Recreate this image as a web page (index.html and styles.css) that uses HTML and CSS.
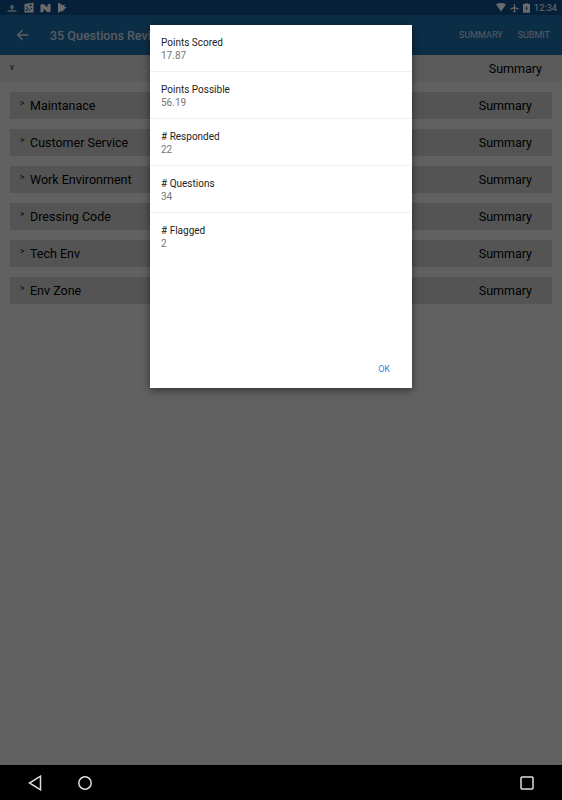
FILE: index.html
```html
<!DOCTYPE html>
<html lang="en">
<head>
<meta charset="utf-8">
<title>35 Questions Review</title>
<link rel="stylesheet" href="styles.css">
</head>
<body>
<div class="screen">
  <div class="status">
    <div class="status-group">
      <svg class="si" width="12" height="12" viewBox="0 0 12 12"><path class="dimicon" d="M6 2.500 8.700 5.500H7.200v2H4.800v-2H3.300zM1.500 8.300h9v1.500h-9z"/></svg>
      <svg class="si" width="10" height="12" viewBox="0 0 10 12"><path d="M.5 2 7 1l2.500-.5v10H.5z"/><circle class="cut" cx="2.800" cy="8" r="1.100"/><circle class="cut" cx="6.700" cy="3.300" r="1.100"/><path class="cutline" d="M2 4.500 5 7M5 9 8 6"/></svg>
      <svg class="si" width="11" height="12" viewBox="0 0 11 12"><path d="M.5 2.500 3.500 2l4 3.500V2.200l3-.2v8l-3 .3-4-3.800v3.500l-3 .3z"/></svg>
      <svg class="si" width="10" height="12" viewBox="0 0 10 12"><path d="M1 1v10l3-2 1 .8L9.500 5.300 7 4.500 8 2.500 5 3.500 4 1.800z"/></svg>
    </div>
    <div class="status-group status-right">
      <svg width="10" height="9" viewBox="0 0 10 9"><path d="M0 1.200Q5-1.200 10 1.200L5 8.500z"/></svg>
      <svg width="9" height="10" viewBox="0 0 12 12"><path d="M5.300.5h1.400v4l5 2.500v1.300l-5-1.500v3l1.500 1.100v.8L6 11l-2.200.7v-.8l1.500-1.100v-3l-5 1.500V7l5-2.500z"/></svg>
      <svg width="7" height="10" viewBox="0 0 8 11"><path d="M2.500 0h3v1H8v10H0V1h2.500z"/><path class="cut" d="M4.500 2.500 2.500 6.200H4L3.500 9l2-3.800H4z"/></svg>
      <span class="clock">12:34</span>
    </div>
  </div>
  <header class="appbar">
    <svg class="back" width="14" height="14" viewBox="0 0 14 14"><path d="M12.500 7H2M6.500 2.200 1.700 7l4.800 4.800"/></svg>
    <h1 class="title">35 Questions Review</h1>
    <nav class="actions"><span>SUMMARY</span><span>SUBMIT</span></nav>
  </header>
  <main class="content">
    <div class="top-row"><span class="chev-down">v</span><span class="summary">Summary</span></div>
    <div class="sections">
      <div class="row"><span class="chev">&gt;</span><span class="name">Maintanace</span><span class="summary">Summary</span></div>
      <div class="row"><span class="chev">&gt;</span><span class="name">Customer Service</span><span class="summary">Summary</span></div>
      <div class="row"><span class="chev">&gt;</span><span class="name">Work Environment</span><span class="summary">Summary</span></div>
      <div class="row"><span class="chev">&gt;</span><span class="name">Dressing Code</span><span class="summary">Summary</span></div>
      <div class="row"><span class="chev">&gt;</span><span class="name">Tech Env</span><span class="summary">Summary</span></div>
      <div class="row"><span class="chev">&gt;</span><span class="name">Env Zone</span><span class="summary">Summary</span></div>
    </div>
  </main>
  <div class="scrim"></div>
  <section class="dialog">
    <div class="stat"><div class="label">Points Scored</div><div class="value">17.87</div></div>
    <div class="stat"><div class="label">Points Possible</div><div class="value">56.19</div></div>
    <div class="stat"><div class="label"># Responded</div><div class="value">22</div></div>
    <div class="stat"><div class="label"># Questions</div><div class="value">34</div></div>
    <div class="stat last"><div class="label"># Flagged</div><div class="value">2</div></div>
    <div class="dialog-actions"><span class="ok">OK</span></div>
  </section>
  <footer class="navbar">
    <svg class="nav-back" width="14" height="16" viewBox="0 0 14 16"><path d="M12.500 1.200v13.600L1.500 8z"/></svg>
    <svg class="nav-home" width="16" height="16" viewBox="0 0 16 16"><circle cx="8" cy="8" r="6.200"/></svg>
    <svg class="nav-recent" width="14" height="14" viewBox="0 0 14 14"><rect x="1" y="1" width="12" height="12" rx="1"/></svg>
  </footer>
</div>
</body>
</html>
```
FILE: styles.css
```css
* { box-sizing: border-box; }
html, body { margin: 0; padding: 0; }
body { font-family: Roboto, "Liberation Sans", sans-serif; }

.screen {
  position: relative;
  width: 562px;
  height: 800px;
  overflow: hidden;
  display: flex;
  flex-direction: column;
  background: #e8e8e8;
}

.status {
  height: 15px;
  flex: none;
  background: #124e89;
  display: flex;
  justify-content: space-between;
  align-items: center;
  padding: 0 5px 0 6px;
}
.status-group { display: flex; align-items: center; gap: 6px; }
.status-right { gap: 4px; }
.status svg path, .status svg circle { fill: #fff; }
.status svg .dimicon { fill: #c4d6e8; }
.status svg .cut { fill: #124e89; }
.status svg .cutline { fill: none; stroke: #124e89; stroke-width: 1; }
.clock { color: #fff; font-size: 9.200px; }

.appbar {
  height: 40px;
  flex: none;
  background: #1d6ca7;
  display: flex;
  align-items: center;
  padding: 0 12px 0 16px;
}
.back { flex: none; margin-right: 20px; }
.back path { fill: none; stroke: #d8e0e8; stroke-width: 1.500; }
.title {
  margin: 0;
  flex: 1;
  font-size: 12.500px;
  font-weight: 500;
  color: #d0dae4;
  white-space: nowrap;
}
.actions { display: flex; gap: 15px; font-size: 9px; color: #d0dae4; }

.content { flex: 1; min-height: 0; }
.top-row {
  height: 27px;
  background: #d8d8d8;
  display: flex;
  justify-content: space-between;
  padding: 6px 20px 0 10px;
}
.chev-down { font-size: 8.500px; line-height: 12px; color: #222; }
.summary { font-size: 12.500px; line-height: 16px; color: #000; }
.sections {
  padding: 10px 10px 0;
  display: flex;
  flex-direction: column;
  gap: 10px;
}
.row {
  height: 27px;
  background: #c8c8c8;
  display: flex;
  align-items: flex-start;
  padding: 6px 20px 0 10px;
}
.chev { font-size: 8.500px; line-height: 11px; color: #222; width: 10px; flex: none; }
.row .name { flex: 1; font-size: 12.500px; line-height: 16px; color: #000; }

.scrim {
  position: absolute;
  inset: 0;
  background: rgba(0, 0, 0, 0.58);
}

.dialog {
  position: absolute;
  left: 150px;
  top: 25px;
  width: 262px;
  height: 363px;
  background: #fff;
  box-shadow: 0 2px 8px rgba(0, 0, 0, 0.5);
  display: flex;
  flex-direction: column;
}
.stat {
  height: 47px;
  flex: none;
  padding: 11px 10px 0 11px;
  border-bottom: 1px solid #f0f0f0;
}
.stat.last { border-bottom: 0; }
.label { font-size: 10px; line-height: 13px; color: #222; }
.value { font-size: 10px; line-height: 14px; color: #757575; }
.dialog-actions {
  margin-top: auto;
  height: 34px;
  display: flex;
  justify-content: flex-end;
  padding: 8px 22px 0 0;
}
.ok { font-size: 9px; line-height: 14px; color: #2a8ae0; }

.navbar {
  position: relative;
  height: 35px;
  flex: none;
  background: #000;
  display: flex;
  align-items: center;
  padding: 0 28px;
}
.navbar svg { fill: none; stroke: #ddd; stroke-width: 1.500; flex: none; }
.nav-back { margin-right: 35px; }
.nav-recent { margin-left: auto; }
```
